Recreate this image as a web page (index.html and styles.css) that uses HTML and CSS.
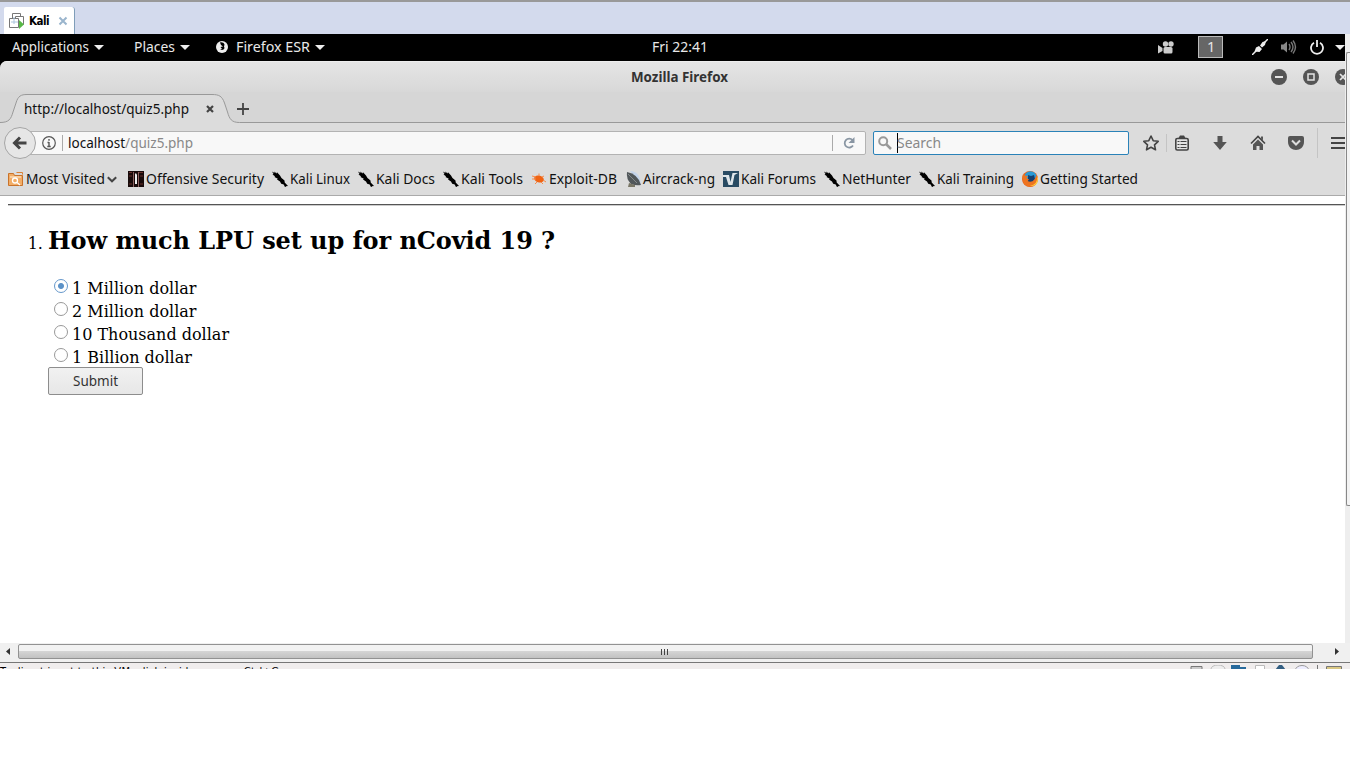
FILE: index.html
```
<!DOCTYPE html>
<html lang="en">
<head>
<meta charset="utf-8">
<title>Mozilla Firefox</title>
<link rel="stylesheet" href="styles.css">
</head>
<body>
<svg class="defs" width="0" height="0">
  <symbol id="dragon" viewBox="0 0 16 16"><path d="M0 .5 2.500 2 2.400.5 4.500 2.500 5 1.200 8 4.500l1.500 2.500 3 2.500 .2 2 3.300 3.500-2 .2-.8 1.300-1.500-3-2.500-.7L8 10.500 5 8.500 5.800 7.800 2.500 6 3 5.200.5 3.500 1.500 3z" fill="#000"/></symbol>
  <symbol id="caret" viewBox="0 0 10 5"><path d="M0 0h10L5 5z" fill="#eee"/></symbol>
</svg>
<div class="vm">
  <div class="vmtabs">
    <div class="vmtab">
      <svg width="17" height="17" viewBox="0 0 17 17"><g fill="#fff" stroke="#777"><path d="M4.500 1.500h8v8h-8z"/><path d="M7.500 4.500h8v8h-8z"/><path d="M1.500 6.500h9v9h-9z"/></g><path d="M6 5v7M3 10h7" stroke="#aac4dc"/><path d="M11 8l5 4.500-5 4.500z" fill="#58b847"/></svg>
      <b>Kali</b>
      <svg class="vmx" width="10" height="10" viewBox="0 0 10 10"><path d="M1.500 1.500l7 7m0-7l-7 7" stroke="#9ab5cd" stroke-width="2"/></svg>
    </div>
  </div>
  <div class="main">
    <div class="guest">
      <div class="panel">
        <svg class="lb" width="77" height="26"><text y="18" textLength="77" lengthAdjust="spacingAndGlyphs">Applications</text></svg>
        <svg class="car" width="10" height="5"><use href="#caret"/></svg>
        <svg class="lb places" width="41" height="26"><text y="18" textLength="41" lengthAdjust="spacingAndGlyphs">Places</text></svg>
        <svg class="car" width="10" height="5"><use href="#caret"/></svg>
        <svg class="globe" width="12" height="12" viewBox="0 0 12 12"><circle cx="6" cy="6" r="6" fill="#eee"/><path d="M4 1.500c2-.5 4 .5 4.500 2L8 5.500l.5 1.500C8 9 6 9.500 4 8.500L6 8 4.500 6 7 5.500 5 4z" fill="#000"/></svg>
        <svg class="lb" width="74" height="26"><text y="18" textLength="74" lengthAdjust="spacingAndGlyphs">Firefox ESR</text></svg>
        <svg class="car" width="10" height="5"><use href="#caret"/></svg>
        <svg class="lb clock" width="56" height="26"><text y="18" textLength="56" lengthAdjust="spacingAndGlyphs">Fri 22:41</text></svg>
        <svg class="cam" width="16" height="13" viewBox="0 0 16 13"><g fill="#ccc"><circle cx="7.500" cy="3" r="2.700"/><circle cx="13" cy="3" r="2.700"/><rect x="5.500" y="6" width="9" height="6.500" rx="1.500"/><path d="M0 4l4.500 3v3L0 12.500z"/></g></svg>
        <span class="ws"><svg class="lb" width="8" height="20"><text y="15">1</text></svg></span>
        <svg class="plug" width="16" height="16" viewBox="0 0 16 16"><path d="M0 16l5-5M11 5l5-5" stroke="#eee" stroke-width="1.500"/><path d="M2.500 12.500L4 8.500l3-1.500 3 3-2.500 3zM8 6.500L10.500 3l3.500-1-1 4-3 2.500z" fill="#eee"/></svg>
        <svg class="vol" width="17" height="16" viewBox="0 0 17 16"><path d="M1 5.500h2.500L7 2.500v11L3.500 10.500H1z" fill="#888"/><path d="M9 5q2 3 0 6M11 3q4 5 0 10M13 1.500q5 6.500 0 13" fill="none" stroke="#777" stroke-width="1.400"/></svg>
        <svg class="pow" width="14" height="15" viewBox="0 0 14 15"><path d="M4 2.700a6 6 0 1 0 6 0M7 0v7" fill="none" stroke="#eee" stroke-width="1.800"/></svg>
        <svg class="car last" width="10" height="5"><use href="#caret"/></svg>
      </div>
      <div class="window">
        <div class="title">
          <svg class="lb bold" width="98" height="26"><text y="18" textLength="97" lengthAdjust="spacingAndGlyphs">Mozilla Firefox</text></svg>
          <svg class="ctl" width="80" height="16" viewBox="0 0 80 16"><g fill="#555"><circle cx="8" cy="8" r="8"/><circle cx="40" cy="8" r="8"/><circle cx="72" cy="8" r="8"/></g><g fill="none" stroke="#e4e4e4"><path d="M4 8h8" stroke-width="2"/><path d="M37 5h6v6h-6z" stroke-width="1.500"/><path d="M69 5l6 6m0-6l-6 6" stroke-width="1.700"/></g></svg>
        </div>
        <div class="tabs">
          <svg class="tabshape" width="1346" height="31" viewBox="0 0 1346 31"><path d="M0 30.500C9 30.500 11 27 13 20l3-9C18 4 21 2.500 27 2.500H212C219 2.500 222 4 224.500 11l3 9c2 7 4 10.500 12 10.500H1346V32H0z" fill="#dcdcdc" stroke="#999"/></svg>
          <div class="tabrow">
            <svg class="lb" width="165" height="26"><text y="18" textLength="165" lengthAdjust="spacingAndGlyphs">http://localhost/quiz5.php</text></svg>
            <svg class="tx" width="8" height="8" viewBox="0 0 8 8"><path d="M1 1l6 6m0-6l-6 6" stroke="#444" stroke-width="2.200"/></svg>
            <svg class="plus" width="12" height="12" viewBox="0 0 12 12"><path d="M0 6h12M6 0v12" stroke="#444" stroke-width="1.800"/></svg>
          </div>
        </div>
        <div class="nav">
          <div class="back"><svg width="16" height="14" viewBox="0 0 16 14"><path d="M8 1.500L2.500 7 8 12.500M3 7h11.500" fill="none" stroke="#444" stroke-width="3"/></svg></div>
          <div class="url">
            <svg class="info" width="14" height="14" viewBox="0 0 14 14"><circle cx="7" cy="7" r="6.300" fill="none" stroke="#555" stroke-width="1.200"/><path d="M7 3v1.800M7 6v5M5.500 6.500H7M5.300 10.500h3.400" stroke="#555" stroke-width="1.400"/></svg>
            <i class="sep"></i>
            <svg class="lb addr" width="125" height="24"><text y="17" textLength="125" lengthAdjust="spacingAndGlyphs">localhost<tspan fill="#888">/quiz5.php</tspan></text></svg>
            <i class="sep s2"></i>
            <svg class="reload" width="12" height="12" viewBox="0 0 12 12"><path d="M9.500 3A4.500 4.500 0 1 0 10 8.500" fill="none" stroke="#8996a3" stroke-width="1.800"/><path d="M11.500 0v6h-6z" fill="#8996a3"/></svg>
          </div>
          <div class="search">
            <svg class="mag" width="14" height="14" viewBox="0 0 14 14"><circle cx="5.200" cy="5.200" r="4" fill="none" stroke="#999" stroke-width="2"/><path d="M8 8l5 5" stroke="#999" stroke-width="2.500"/></svg>
            <i class="cursor"></i>
            <svg class="lb ph" width="44" height="24"><text y="17" textLength="44" lengthAdjust="spacingAndGlyphs">Search</text></svg>
          </div>
          <svg class="tools" width="204" height="30" viewBox="0 0 204 30">
            <path d="M10 8l2.200 4.700 5 .6-3.700 3.500 1 5L10 19.300 5.500 21.800l1-5-3.700-3.500 5-.6z" fill="none" stroke="#444" stroke-width="1.600" stroke-linejoin="round"/>
            <path d="M25.500 6v18M176.500 0v30" stroke="#c4c4c4"/>
            <rect x="34.800" y="10.500" width="12.400" height="11.500" rx="1.500" fill="#e4e4e4" stroke="#444" stroke-width="1.600"/><path d="M36.500 13.500h2m1 0h6M36.500 16.500h2m1 0h6M36.500 19.500h2m1 0h6" stroke="#444" stroke-width="1.200"/><path d="M37.500 10l1.500-2.500h4L44.500 10z" fill="#444"/>
            <path d="M76.500 8h5v6h4.300L79 22l-6.800-8h4.300z" fill="#555"/>
            <path d="M110 15.500l7-7 7 7" fill="none" stroke="#444" stroke-width="1.600"/><path d="M112 16.500l5-5 5 5v5.500h-3.500v-4h-3v4H112zM120 8.500h2V12.500L120 10.500z" fill="#555"/>
            <path d="M149 8h12q2 0 2 2v4c0 5-4 8-8 8s-8-3-8-8v-4q0-2 2-2z" fill="#555"/><path d="M151 12.500l4 4 4-4" fill="none" stroke="#ddd" stroke-width="2"/>
            <path d="M190 10h18M190 15h18M190 20h18" stroke="#444" stroke-width="2.200"/>
          </svg>
        </div>
        <div class="marks">
          <div class="m"><svg width="16" height="16" viewBox="0 0 16 16"><path d="M.5 14.500v-12h5l1 2h8v10z" fill="#f2ad67" stroke="#c9732b"/><path d="M8.500 1.500h6v2" fill="none" stroke="#d98236"/><path d="M2 6h11" stroke="#fff0d9"/><circle cx="7" cy="9.500" r="2.500" fill="none" stroke="#fff" stroke-width="1.300"/><path d="M9 11.500l3 2.500" stroke="#fff" stroke-width="1.300"/></svg><svg class="lb" width="79" height="26"><text y="18" textLength="79" lengthAdjust="spacingAndGlyphs">Most Visited</text></svg><svg class="chev" width="10" height="7" viewBox="0 0 10 7"><path d="M.8 1.200L5 5.300 9.200 1.200" fill="none" stroke="#444" stroke-width="2"/></svg></div>
          <div class="m off"><svg width="16" height="16" viewBox="0 0 16 16"><path fill="#180b0b" d="M0 0h16v16H0z"/><path d="M1 1.500h3M11 1.500h4M1 5h3M12 5h3M1 13h3M12 13h3" stroke="#69302b"/><path d="M5.500 1v15M10.500 1v15" stroke="#8c6260"/><path d="M7 3q1-2 2 1v9H7z" fill="#eee"/></svg><svg class="lb" width="118" height="26"><text y="18" textLength="118" lengthAdjust="spacingAndGlyphs">Offensive Security</text></svg></div>
          <div class="m"><svg width="16" height="16"><use href="#dragon"/></svg><svg class="lb" width="60" height="26"><text y="18" textLength="60" lengthAdjust="spacingAndGlyphs">Kali Linux</text></svg></div>
          <div class="m"><svg width="16" height="16"><use href="#dragon"/></svg><svg class="lb" width="59" height="26"><text y="18" textLength="59" lengthAdjust="spacingAndGlyphs">Kali Docs</text></svg></div>
          <div class="m"><svg width="16" height="16"><use href="#dragon"/></svg><svg class="lb" width="62" height="26"><text y="18" textLength="62" lengthAdjust="spacingAndGlyphs">Kali Tools</text></svg></div>
          <div class="m"><svg width="16" height="16" viewBox="0 0 16 16"><ellipse cx="8" cy="8" rx="5" ry="3.300" transform="rotate(18 8 8)" fill="#f06414"/><path d="M1 5l4 1M1 8h4M6 11l-2 2M8 5V2.500M11 6l2-1M12 9l3 2M10 11l2 2" stroke="#f58a4a"/></svg><svg class="lb" width="68" height="26"><text y="18" textLength="68" lengthAdjust="spacingAndGlyphs">Exploit-DB</text></svg></div>
          <div class="m air"><svg width="16" height="16" viewBox="0 0 16 16"><path d="M4 0q10 0 11 14z" fill="#c4d4ea"/><path d="M1 1Q12 3 15 14q-5 1-10-1Q0 8 1 1z" fill="#51575a"/><path d="M2 3l9 9" stroke="#84898a"/><path d="M3 12l-1 4h7v-2z" fill="#7a7766"/></svg><svg class="lb" width="72" height="26"><text y="18" textLength="72" lengthAdjust="spacingAndGlyphs">Aircrack-ng</text></svg></div>
          <div class="m"><svg width="16" height="16" viewBox="0 0 16 16"><path fill="#294b63" d="M0 0h16v16H0z"/><path d="M0 4h6l1.500 7 2-9H15l-3.500 2L9.500 14H5.500L3 6H0z" fill="#dfe6ea"/></svg><svg class="lb" width="75" height="26"><text y="18" textLength="75" lengthAdjust="spacingAndGlyphs">Kali Forums</text></svg></div>
          <div class="m"><svg width="16" height="16"><use href="#dragon"/></svg><svg class="lb" width="69" height="26"><text y="18" textLength="69" lengthAdjust="spacingAndGlyphs">NetHunter</text></svg></div>
          <div class="m"><svg width="16" height="16"><use href="#dragon"/></svg><svg class="lb" width="77" height="26"><text y="18" textLength="77" lengthAdjust="spacingAndGlyphs">Kali Training</text></svg></div>
          <div class="m"><svg width="16" height="16" viewBox="0 0 16 16"><circle cx="8" cy="8" r="8" fill="#e8641b"/><circle cx="8.500" cy="6.500" r="6.300" fill="#2b9bd6"/><path d="M6 4l3 1 3-1 1 4-3 4-4-1z" fill="#16406f"/><path d="M1 3l2 1.500 3 .5-1.500 2L7 8.500 5.500 10q4 2 7-1.500L14.500 4q2.500 6-1.500 10-6 4-11-1Q-.5 8 1 3z" fill="#ee7420"/><path d="M15 6q1 7-7 9 8 1 8-8z" fill="#ffd23c"/></svg><svg class="lb" width="98" height="26"><text y="18" textLength="98" lengthAdjust="spacingAndGlyphs">Getting Started</text></svg></div>
        </div>
        <div class="page">
          <hr>
          <ol><li><h2>How much LPU set up for nCovid 19 ?</h2>
            <div class="opt"><i class="radio on"></i><span>1 Million dollar</span></div>
            <div class="opt"><i class="radio"></i><span>2 Million dollar</span></div>
            <div class="opt"><i class="radio"></i><span>10 Thousand dollar</span></div>
            <div class="opt"><i class="radio"></i><span>1 Billion dollar</span></div>
            <div class="submit"><svg class="lb" width="45" height="26"><text y="18" textLength="45" lengthAdjust="spacingAndGlyphs">Submit</text></svg></div>
          </li></ol>
        </div>
      </div>
    </div>
    <div class="vscroll"><div class="vthumb"></div></div>
  </div>
  <div class="hscroll">
    <svg width="4" height="7" viewBox="0 0 4 7"><path d="M4 0v7L0 3.500z" fill="#333"/></svg>
    <div class="hthumb"><i></i><i></i><i></i></div>
    <svg class="ra" width="4" height="7" viewBox="0 0 4 7"><path d="M0 0v7L4 3.500z" fill="#333"/></svg>
  </div>
  <div class="status">
    <span>To direct input to this VM, click inside or press Ctrl+G.</span>
    <svg width="160" height="5" viewBox="0 0 160 5"><path d="M1 6V1.500h11V6" fill="#ccc" stroke="#777"/><ellipse cx="28" cy="4" rx="7" ry="4" fill="#eee" stroke="#bbb"/><path d="M41 0h9v2h6v3H41z" fill="#276a9c"/><path d="M65.500 6V.5h9V6" fill="#fff" stroke="#bbb"/><path d="M85 5l4-5h3l4 5z" fill="#345f82"/><ellipse cx="112" cy="5" rx="6.500" ry="4.500" fill="#eef" stroke="#999"/><path d="M127.500 0v5" stroke="#777"/><path d="M136.500 6V1.500h15V6" fill="#dac883" stroke="#777"/></svg>
  </div>
</div>
</body>
</html>
```
FILE: styles.css
```
* { box-sizing: border-box; }
body { margin: 0; background: #fff; width: 1366px; height: 762px; overflow: hidden; font-family: "Noto Sans", sans-serif; }
svg { display: block; flex: none; overflow: hidden; }
.defs { position: absolute; }
.vm { width: 1350px; }
.vmtabs { height: 34px; background: #d3daed; border-top: 2px solid #999; padding: 5px 0 0 4px; }
.vmtab { width: 71px; height: 27px; background: #fff; border-right: 1px solid #7f9db9; border-radius: 2px 3px 0 0; display: flex; align-items: center; padding-left: 4px; }
.vmtab b { font: bold 11.500px "DejaVu Sans Condensed", "DejaVu Sans", sans-serif; width: 21px; margin-left: 4px; letter-spacing: -.5px; padding-top: 1px; }
.vmx { margin-left: 8px; }
.main { display: flex; height: 609px; background: #efefef; }
.guest { width: 1345px; flex: none; overflow: hidden; background: #000; }
.vscroll { flex: 1; padding-top: 18px; background: #eee; }
.vthumb { height: 454px; margin-left: 1px; border: solid #888; border-width: 1px 0 1px 1px; background: #f3f3f3; border-radius: 2px 0 0 2px; }
.lb { font-family: "Noto Sans", sans-serif; font-size: 14.500px; fill: #111; overflow: visible; }
.panel { height: 27px; display: flex; align-items: center; padding: 0 0 1px 12px; }
.panel .lb { fill: #e8e8e8; }
.car { margin-left: 5px; }
.places { margin-left: 30px; }
.globe { margin: 0 8px 0 26px; }
.clock { margin-left: 327px; }
.cam { margin-left: 450px; }
.ws { width: 26px; height: 22px; margin-left: 24px; border: 1px solid #bbb; background: #666; display: flex; justify-content: center; }
.plug { margin-left: 29px; }
.vol { margin-left: 12px; }
.pow { margin-left: 13px; }
.last { margin-left: 11px; }
.window { height: 582px; background: #dcdcdc; border-radius: 7px 0 0 0; overflow: hidden; }
.title { height: 31px; background: linear-gradient(#e5e5e5, #d8d8d8); display: flex; padding: 2px 0 0 631px; border-top: 1px solid #eee; }
.title .lb { fill: #333; }
.bold { font-weight: 700; }
.ctl { margin: 5px 0 0 542px; }
.tabs { height: 31px; display: grid; background: #d6d6d6; }
.tabshape, .tabrow { grid-area: 1 / 1; }
.tabrow { display: flex; align-items: center; padding: 3px 0 0 24px; height: 31px; }
.tx { margin-left: 17px; }
.plus { margin-left: 23px; }
.nav { height: 39px; display: flex; align-items: center; padding-left: 4px; }
.back { width: 32px; height: 32px; border: 1px solid #a5a5a5; border-radius: 50%; background: #e6e6e6; display: flex; align-items: center; justify-content: center; z-index: 1; flex: none; }
.url { margin-left: -6px; width: 836px; height: 24px; border: 1px solid #b3b3b3; border-radius: 0 2px 2px 0; background: #f8f8f8; display: flex; align-items: center; padding-left: 11px; flex: none; }
.sep { width: 1px; height: 16px; background: #aaa; margin: 0 5px 0 6px; }
.s2 { margin: 0 10px 0 639px; }
.search { margin-left: 7px; width: 256px; height: 24px; border: 1px solid #2a82b8; border-radius: 2px; background: #f8f8f8; display: flex; align-items: center; padding-left: 4px; flex: none; }
.cursor { width: 1px; height: 20px; margin-left: 5px; background: #000; }
.ph { margin-left: -1px; }
.search .lb { fill: #888; }
.tools { margin-left: 12px; }
.marks { height: 34px; display: flex; padding: 1px 0 0 8px; gap: 8px; border-bottom: 1px solid #aaa; }
.m { display: flex; align-items: center; gap: 2px; height: 32px; }
.off { margin-left: 3px; }
.air { margin-left: 1px; gap: 1px; }
.page { height: 447px; background: #fff; padding: 8px 0 0 8px; font: 16px/19px "DejaVu Serif", serif; color: #000; }
hr { margin: 0; border: 0; height: 2px; background: #555; border-bottom: 1px solid #ccc; }
ol { margin: 20px 0 0; padding-left: 40px; }
h2 { font-size: 24px; line-height: 29px; margin: 0 0 21px; letter-spacing: -.08px; }
.opt { height: 23px; display: flex; align-items: center; padding-left: 6px; }
.opt span { margin-left: 4px; padding-top: 1px; }
.radio { width: 14px; height: 14px; border: 1px solid #999; border-radius: 50%; margin-top: -3px; }
.on { border-color: #6698cb; background: radial-gradient(circle, #5c92c8 0 2.500px, #fff 3.500px); }
.submit { width: 95px; height: 28px; margin-top: -1px; border: 1px solid #8d8d8d; border-radius: 2px; background: linear-gradient(#f1f1f1, #e7e7e7); display: flex; justify-content: center; align-items: center; padding-bottom: 1px; }
.submit .lb { fill: #333; }
.hscroll { height: 19px; background: #f0f0f0; display: flex; align-items: center; padding: 0 0 3px 6px; }
.hthumb { width: 1295px; height: 15px; margin: 1px 0 0 8px; border: 1px solid #929292; border-radius: 2px; background: linear-gradient(#f2f2f2 0 45%, #d4d4d4 50%, #c2c2c2); display: flex; justify-content: center; align-items: center; gap: 2px; padding-right: 2px; }
.hthumb i { width: 1px; height: 6px; background: #444; }
.ra { margin-left: 22px; }
.status { height: 7px; border-top: 1px solid #777; background: #f0eded; overflow: hidden; display: flex; justify-content: space-between; }
.status span { font: 11px/13px "DejaVu Sans Condensed", "DejaVu Sans", sans-serif; padding-top: 2px; white-space: nowrap; letter-spacing: .28px; color: #000; }
.status svg { margin-top: 2px; }
```
